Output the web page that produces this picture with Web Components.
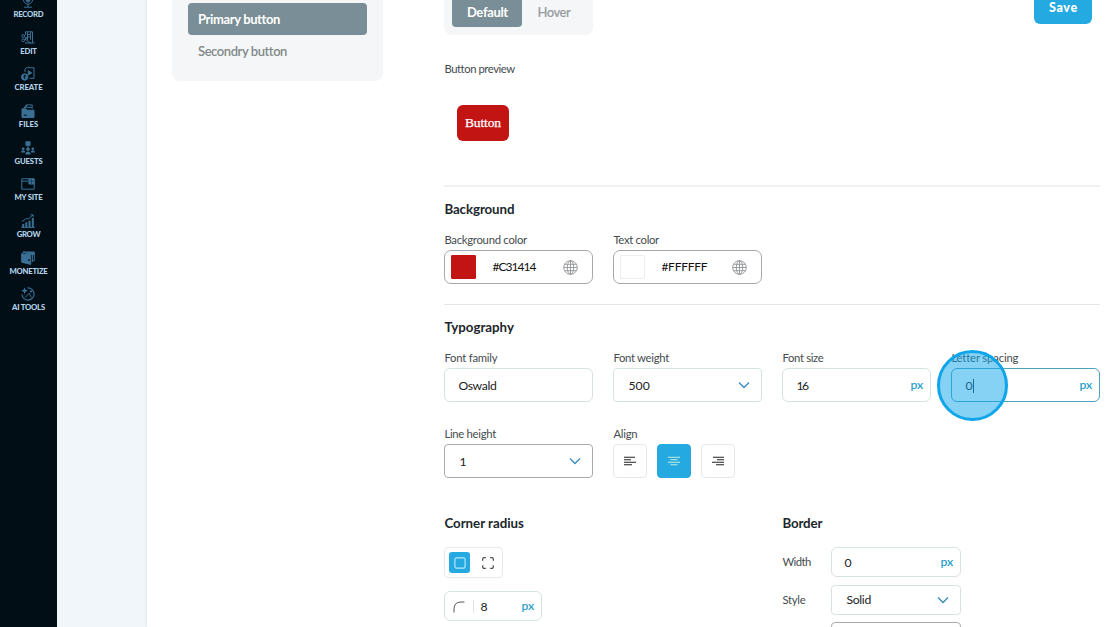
<!DOCTYPE html>
<html lang="en">
<head>
<meta charset="utf-8">
<title>Button styles</title>
<style>
  html, body { margin: 0; height: 100%; overflow: hidden; }
  body { font-family: Lato, "Open Sans", sans-serif; background: #fff; }
</style>
</head>
<body>
<style-editor></style-editor>

<script>
"use strict";

function define(name, html, setup) {
  const t = document.createElement('template');
  t.innerHTML = html;
  customElements.define(name, class extends HTMLElement {
    constructor() {
      super();
      this.attachShadow({ mode: 'open' }).appendChild(t.content.cloneNode(true));
    }
    connectedCallback() {
      if (setup) setup(this, this.shadowRoot);
    }
  });
}

// text tracked out (or in) to the width given in "w"
define('fit-text', `
  <style>
    :host { display: inline-block; white-space: nowrap; }
    span { display: inline-block; }
  </style>
  <span><slot></slot></span>`, (el, root) => {
  const w = parseFloat(el.getAttribute('w'));
  const span = root.querySelector('span');
  const n = el.textContent.length;
  const natural = span.getBoundingClientRect().width;
  if (!w || !natural) return;
  span.style.letterSpacing = (w - natural) / n + 'px';
});

const ICONS = {
  record: '<circle cx="7" cy="5.5" r="4.6"/><rect x="5.2" y="2.5" width="3.6" height="5.5" rx="1.8" fill="currentColor"/><path d="M7 10v3M3 13.2h8"/>',
  edit: '<path d="M4.5 4V.8h7V12M6.5.8v8M9.6.8v8M6.5 3.5h3M6.5 6h3M4 8.2l6 4M4 12h9.5"/><circle cx="2.2" cy="5" r="1.4"/><circle cx="2.2" cy="9.3" r="1.4"/><path d="M3.5 5.8L7 9M3.5 8.6L6 6.3"/>',
  create: '<path d="M4 5V2l1.4-1.3H13v10.6H8.5"/><path d="M7.3 3.7v4.2L10.7 6z" fill="currentColor"/><circle cx="3.7" cy="10" r="3.2" fill="currentColor"/><path d="M3.7 8.1v3.8M2.3 9.4l1.4-1.3 1.4 1.3" stroke="#020e16"/>',
  files: '<path d="M1 4.8h4l1.3 1.4H13v7.2H1z" fill="currentColor"/><path d="M3.2 3.5l2-2.6h6v3.8M6 3.4h5M5.4 1v2.5H3"/><path d="M2.8 11.2h3" stroke="#020e16"/>',
  guests: '<rect x="5" y=".8" width="4" height="3.5" fill="currentColor"/><path d="M7 4v3"/><g fill="currentColor" stroke="none"><circle cx="7" cy="8.3" r="1.7"/><path d="M4.4 13.6c0-4 5.2-4 5.2 0z"/><circle cx="2.2" cy="7.8" r="1.4"/><path d="M0 11.6c0-3 3.7-3 4.3-.8l-.5.8zM14 11.6c0-3-3.7-3-4.3-.8l.5.8z"/><circle cx="11.8" cy="7.8" r="1.4"/></g>',
  site: '<path d="M.8 1.8h12.4v10.4H.8zM.8 4.2h12.4"/><path d="M8 2h5v5H8z" fill="currentColor"/><path d="M8 4.2h5M10.5 2v5" stroke="#0d2d43" stroke-width=".6"/>',
  grow: '<path d="M.3 13.4h13.4"/><g fill="currentColor" stroke="none"><path d="M1.2 10h2v3h-2zM4.3 8.3h2V13h-2zM7.5 6.7h2V13h-2zM10.8 4h2v9h-2z"/></g><path d="M1 7.5l4.5-3 1.7.5L12 1M9.5.8h2.7v2.3"/>',
  money: '<path d="M.7 2.7L9.7 4.1v9.3L.7 11.2z" fill="currentColor"/><path d="M1.5 1.2h11.8v8.5h-2" /><path d="M2 1.2h11v2.2H9.5z" fill="currentColor"/><circle cx="8" cy="9" r=".9" fill="#020e16" stroke="none"/><path d="M11.4 4v7"/>',
  ai: '<path d="M6.5.9A6.1 6.1 0 1 1 .9 7.5" stroke-width="1.2"/><path d="M3.6.4l1 2.4 2.3 1-2.3 1-1 2.4-1-2.4-2.3-1 2.3-1z" fill="currentColor" stroke="none"/><path d="M4 10.5l4.5-4.5M8.3 6.3l2 4M10 3.2v2.4M8.8 4.4h2.4"/>'
};

define('nav-item', `
  <style>
    :host { display: flex; flex-direction: column; align-items: center; height: 36.65px; color: #3b7094; }
    svg { width: 14px; height: 14px; margin-right: 1px; fill: none; stroke: currentColor; stroke-width: 1; }
    .name { margin-top: 1px; font-weight: 900; font-size: 7.7px; line-height: 10px; color: #b2d3e9; }
  </style>
  <svg viewBox="0 0 14 14"></svg>
  <div class="name"><slot></slot></div>`, (el, root) => {
  root.querySelector('svg').innerHTML = ICONS[el.getAttribute('icon')];
});

define('side-nav', `
  <style>
    :host { display: block; width: 57px; background: #020e16; overflow: hidden; }
    nav { margin-top: -5.9px; }
  </style>
  <nav>
    <nav-item icon="record"><fit-text w="30">RECORD</fit-text></nav-item>
    <nav-item icon="edit"><fit-text w="16.5">EDIT</fit-text></nav-item>
    <nav-item icon="create"><fit-text w="28">CREATE</fit-text></nav-item>
    <nav-item icon="files"><fit-text w="19.5">FILES</fit-text></nav-item>
    <nav-item icon="guests"><fit-text w="28">GUESTS</fit-text></nav-item>
    <nav-item icon="site"><fit-text w="28">MY SITE</fit-text></nav-item>
    <nav-item icon="grow"><fit-text w="23.5">GROW</fit-text></nav-item>
    <nav-item icon="money"><fit-text w="38">MONETIZE</fit-text></nav-item>
    <nav-item icon="ai"><fit-text w="33">AI TOOLS</fit-text></nav-item>
  </nav>`);

define('button-list', `
  <style>
    :host { display: block; box-sizing: border-box; width: 211px; height: 81px; padding: 3px 16px 0; background: #f4f6f8; border-radius: 0 0 8px 8px; font-size: 13px; font-weight: 600; }
    div { height: 32px; line-height: 32px; padding-left: 10px; color: #828989; border-radius: 4px; }
    .on { background: #798e96; color: #fff; font-weight: 700; }
  </style>
  <div class="on"><fit-text w="81.5">Primary button</fit-text></div>
  <div><fit-text w="88.5">Secondry button</fit-text></div>`);

define('state-tabs', `
  <style>
    :host { display: flex; box-sizing: border-box; width: 149px; height: 35px; padding: 0 8px 8px; background: #f4f6f8; border-radius: 0 0 8px 8px; font-size: 13px; font-weight: 600; }
    div { width: 70px; line-height: 25px; text-align: center; color: #969c9f; border-radius: 0 0 4px 4px; }
    .on { background: #798e96; color: #fff; font-weight: 700; }
    div + div { width: 63px; }
  </style>
  <div class="on"><fit-text w="41">Default</fit-text></div>
  <div><fit-text w="33">Hover</fit-text></div>`);

define('section-title', `
  <style>
    :host { display: block; font-size: 13.3px; line-height: 18px; font-weight: 700; color: #20262a; }
  </style>
  <slot></slot>`);

define('field-label', `
  <style>
    :host { display: block; font-size: 11.3px; line-height: 16px; color: #454b4f; }
  </style>
  <slot></slot>`);

define('form-field', `
  <style>
    :host { display: block; }
    field-label { margin-bottom: 2px; }
  </style>
  <field-label><slot name="label"></slot></field-label>
  <slot></slot>`);

// text input or select box; --line is the border colour
define('input-box', `
  <style>
    :host { display: flex; align-items: center; box-sizing: border-box; height: var(--h, 34px); padding: 0 7px 0 var(--pad, 13px); border: 1px solid var(--line, #d8e1e4); border-radius: var(--r, 6px); background: #fff; font-size: 12.2px; line-height: 16px; color: #1d2224; }
    .value { flex: 1; display: flex; align-items: center; padding-top: 1px; }
    .unit { display: none; color: #2c9fcb; font-weight: 600; }
    svg { display: none; width: 12px; height: 8px; margin-right: 4.5px; fill: none; stroke: #3c8dbd; stroke-width: 1.4; }
    :host([unit]) .unit, :host([select]) svg { display: block; }
    :host([select]) { --r: 4px; --pad: 14px; }
  </style>
  <div class="value"><slot></slot></div>
  <div class="unit"><fit-text w="13">px</fit-text></div>
  <svg viewBox="0 0 12 8"><path d="M1 1.5l5 5 5-5"/></svg>`);

define('color-box', `
  <style>
    :host { display: flex; align-items: center; box-sizing: border-box; height: 34px; padding: 0 14px 0 6px; border: 1px solid #a6a8ad; border-radius: 7px; font-size: 12px; line-height: 16px; color: #111; }
    i { box-sizing: border-box; width: 25px; height: 24px; background: var(--swatch); border: 1px solid var(--edge, var(--swatch)); border-radius: 1px; }
    .hex { flex: 1; padding: 0 0 1px 16px; }
    svg { width: 15px; height: 15px; fill: none; stroke: #929497; stroke-width: .9; }
  </style>
  <i></i>
  <div class="hex"><slot></slot></div>
  <svg viewBox="0 0 15 15"><circle cx="7.5" cy="7.5" r="6.8"/><ellipse cx="7.5" cy="7.5" rx="3.2" ry="6.8"/><path d="M7.5.7v13.6M.7 7.5h13.6M1.6 4.3h11.8M1.6 10.7h11.8"/></svg>`);

define('align-picker', `
  <style>
    :host { display: flex; gap: 10px; }
    div { display: flex; box-sizing: border-box; width: 34px; height: 34px; align-items: center; justify-content: center; border: 1px solid #e5e9eb; border-radius: 4px; color: #222; }
    .on { background: #24a9e0; border-color: #24a9e0; color: #c4ebdc; }
    svg { width: 12px; height: 10px; stroke: currentColor; stroke-width: 1.1; }
  </style>
  <div><svg viewBox="0 0 12 10"><path d="M0 1.2h11M0 3.7h7M0 6.2h12M0 8.7h8"/></svg></div>
  <div class="on"><svg viewBox="0 0 12 10"><path d="M0 1.2h12M2.5 3.7h7M0 6.2h12M2.5 8.7h7"/></svg></div>
  <div><svg viewBox="0 0 12 10"><path d="M1 1.2h11M5 3.7h7M0 6.2h12M4 8.7h8"/></svg></div>`);

define('corner-toggle', `
  <style>
    :host { display: flex; align-items: center; box-sizing: border-box; width: 59px; height: 31px; padding-left: 4px; gap: 7px; border: 1px solid #e5eaec; border-radius: 4px; }
    div { display: flex; width: 21px; height: 21px; align-items: center; justify-content: center; border-radius: 3px; color: #43484b; }
    .on { background: #24a9e0; color: #b5e8f8; }
    svg { width: 12px; height: 12px; fill: none; stroke: currentColor; stroke-width: 1.2; }
  </style>
  <div class="on"><svg viewBox="0 0 12 12"><rect x=".9" y=".9" width="10.2" height="10.2" rx="1.6"/></svg></div>
  <div><svg viewBox="0 0 12 12"><path d="M.7 3.8V2Q.7.7 2 .7h1.8M8.2.7H10q1.3 0 1.3 1.3v1.8M11.3 8.2V10q0 1.3-1.3 1.3H8.2M3.8 11.3H2Q.7 11.3.7 10V8.2"/></svg></div>`);

// highlight ring around the mouse pointer
define('click-ring', `
  <style>
    :host { position: absolute; box-sizing: border-box; width: 71px; height: 71px; border: 3px solid #0fa5eb; border-radius: 50%; background: rgba(14, 165, 233, .5); }
  </style>`);

define('style-form', `
  <style>
    :host { display: block; width: 656px; }
    header { display: flex; justify-content: space-between; height: 35px; }
    .save { width: 58px; height: 24px; margin-right: 8px; line-height: 15px; text-align: center; font-size: 12.5px; font-weight: 900; color: #fff; background: #24a9e0; border-radius: 0 0 6px 6px; }
    .preview { height: 124px; padding-top: 26px; border-bottom: 2px solid #f0f1f2; }
    .sample { width: 52px; height: 36px; margin: 28px 0 0 12.5px; line-height: 36px; text-align: center; font-family: "Liberation Serif", serif; font-size: 13.5px; color: #fff; background: #c31414; border-radius: 6px; -webkit-text-stroke: .25px #fff; }
    .background { height: 104px; padding-top: 13px; border-bottom: 1px solid #e2e8e9; }
    .typography { padding-top: 13px; }
    .row { display: grid; grid-template-columns: repeat(4, 149px); gap: 24px 20px; }
    section-title { margin-bottom: 14px; }
    .focus { position: relative; }
    click-ring { left: -14.5px; top: -.5px; }
    .caret { width: 1px; height: 14px; background: #333; }
    .bottom { display: grid; grid-template-columns: 338px 1fr; margin-top: 36px; }
    .bottom section-title { margin-bottom: 15px; }
    .corner { width: 98px; margin-top: 13px; --h: 30px; --pad: 8px; --r: 6px; }
    .arc { width: 12px; height: 12px; fill: none; stroke: #555b5f; }
    .bar { width: 1px; height: 13px; margin: 0 6px 0 8px; background: #dfe4e6; }
    .lines { display: grid; grid-template-columns: 49px 130px; row-gap: 7.5px; align-items: center; --h: 30px; }
    .lines input-box { --pad: 12px; }
    .lines input-box[select] { --pad: 14px; }
  </style>
  <header>
    <state-tabs></state-tabs>
    <div class="save"><fit-text w="29">Save</fit-text></div>
  </header>
  <section class="preview">
    <field-label><fit-text w="70">Button preview</fit-text></field-label>
    <div class="sample"><fit-text w="36">Button</fit-text></div>
  </section>
  <section class="background">
    <section-title><fit-text w="70">Background</fit-text></section-title>
    <div class="row">
      <form-field>
        <fit-text slot="label" w="82.5">Background color</fit-text>
        <color-box style="--swatch:#c31414"><fit-text w="43">#C31414</fit-text></color-box>
      </form-field>
      <form-field>
        <fit-text slot="label" w="45.5">Text color</fit-text>
        <color-box style="--swatch:#fff;--edge:#eee"><fit-text w="46">#FFFFFF</fit-text></color-box>
      </form-field>
    </div>
  </section>
  <section class="typography">
    <section-title><fit-text w="69.5">Typography</fit-text></section-title>
    <div class="row">
      <form-field>
        <fit-text slot="label" w="53">Font family</fit-text>
        <input-box><fit-text w="38">Oswald</fit-text></input-box>
      </form-field>
      <form-field>
        <fit-text slot="label" w="55.5">Font weight</fit-text>
        <input-box select><fit-text w="21.5">500</fit-text></input-box>
      </form-field>
      <form-field>
        <fit-text slot="label" w="41">Font size</fit-text>
        <input-box unit><fit-text w="11">16</fit-text></input-box>
      </form-field>
      <form-field class="focus">
        <fit-text slot="label" w="66.5">Letter spacing</fit-text>
        <input-box unit style="--line:#4ba3bf"><fit-text w="7.5">0</fit-text><span class="caret"></span></input-box>
        <click-ring></click-ring>
      </form-field>
      <form-field>
        <fit-text slot="label" w="51.5">Line height</fit-text>
        <input-box select style="--line:#a8abad">1</input-box>
      </form-field>
      <form-field>
        <fit-text slot="label" w="24">Align</fit-text>
        <align-picker></align-picker>
      </form-field>
    </div>
  </section>
  <section class="bottom">
    <div>
      <section-title><fit-text w="79.5">Corner radius</fit-text></section-title>
      <corner-toggle></corner-toggle>
      <input-box unit class="corner">
        <svg class="arc" viewBox="0 0 12 12"><path d="M1 11.5V8Q1 1 8 1h3.5"/></svg>
        <span class="bar"></span>8
      </input-box>
    </div>
    <div>
      <section-title><fit-text w="40">Border</fit-text></section-title>
      <div class="lines">
        <field-label><fit-text w="28.5">Width</fit-text></field-label>
        <input-box unit><fit-text w="8">0</fit-text></input-box>
        <field-label><fit-text w="23">Style</fit-text></field-label>
        <input-box select><fit-text w="24.5">Solid</fit-text></input-box>
        <span></span>
        <input-box style="--line:#a8abad;--r:4px"></input-box>
      </div>
    </div>
  </section>`);

define('style-editor', `
  <style>
    :host { display: flex; height: 627px; overflow: hidden; background: #f1f6fa; }
    main { flex: 1; display: flex; align-items: flex-start; gap: 61.4px; margin-left: 90px; padding-left: 25px; background: #fff; box-shadow: 0 0 3px rgba(60, 80, 100, .15); }
  </style>
  <side-nav></side-nav>
  <main>
    <button-list></button-list>
    <style-form></style-form>
  </main>`);
</script>
</body>
</html>
